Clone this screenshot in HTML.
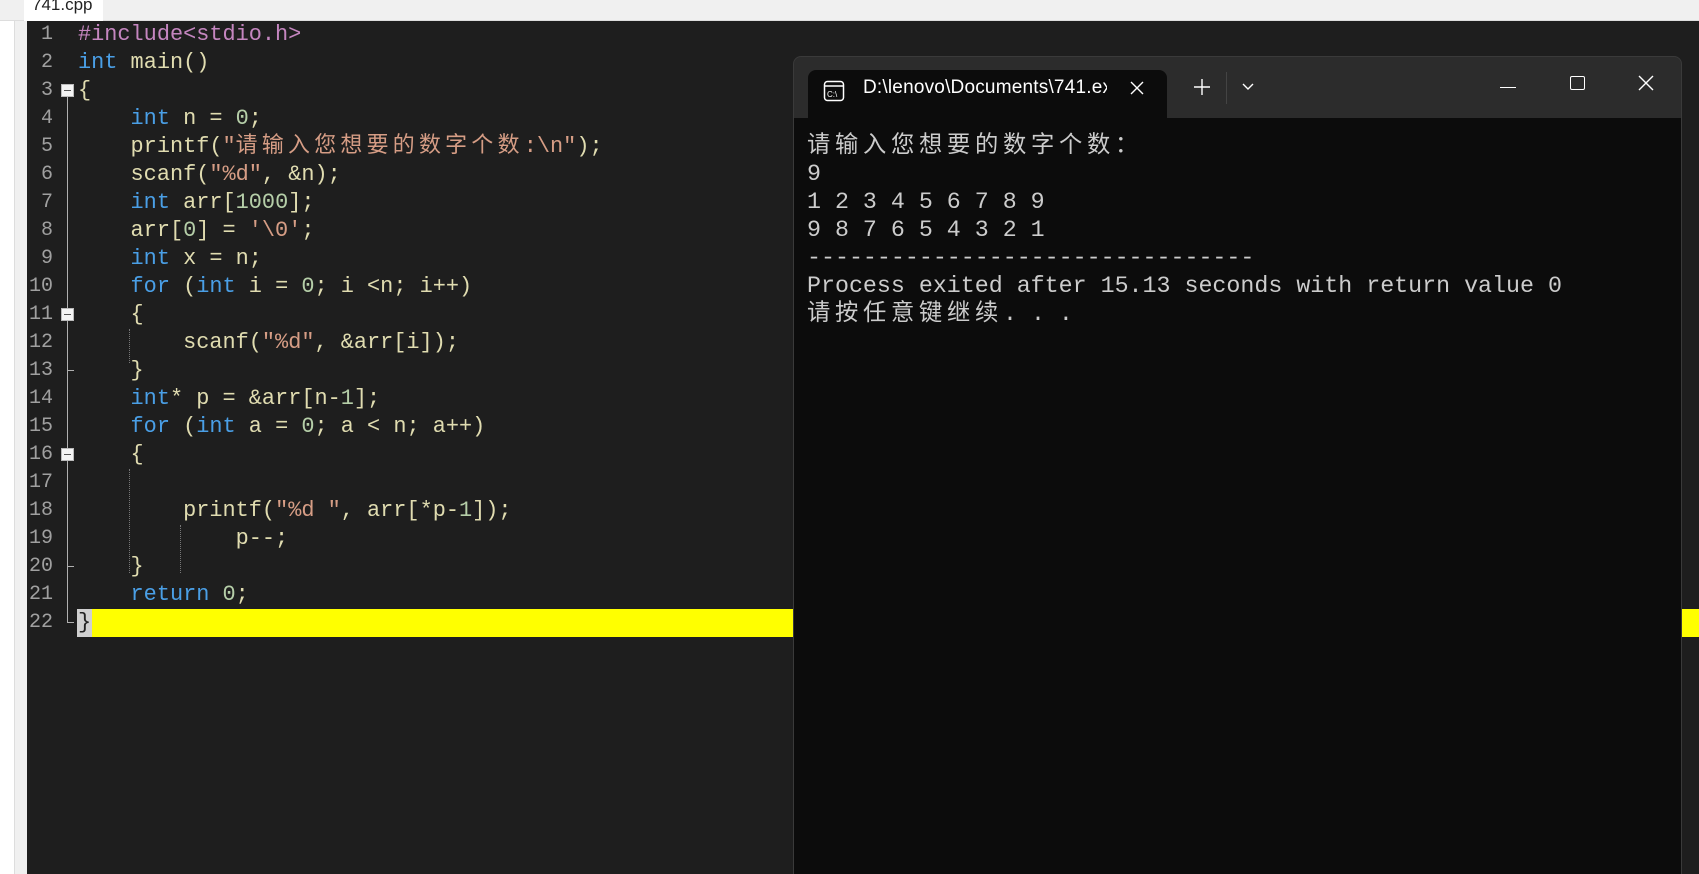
<!DOCTYPE html>
<html><head><meta charset="utf-8"><style>
*{margin:0;padding:0;box-sizing:border-box}
html,body{width:1699px;height:874px;overflow:hidden}
body{background:#fff;position:relative;font-family:"Liberation Sans","Noto Sans CJK SC",sans-serif}
.topbar{position:absolute;left:0;top:0;width:1699px;height:21px;background:#f0f0f0;border-bottom:1px solid #ddd}
.tab{position:absolute;left:24px;top:-4px;width:79px;height:25px;background:#fff;font-size:17px;color:#222;padding-left:8px;line-height:18px}
.lstrip{position:absolute;left:14px;top:21px;width:13px;height:853px;background:#f0f0f0;border-left:1px solid #ddd}
.ed{position:absolute;left:27px;top:21px;width:1672px;height:853px;background:#1e1e1e}
.ln{position:absolute;left:27px;width:26px;text-align:right;font:20px "Liberation Mono",monospace;color:#a0a0a0;line-height:28px}
.code{position:absolute;left:78px;top:21px;font:21.9px "Liberation Mono","Noto Sans CJK SC",monospace;line-height:28px;color:#e0dcb0;white-space:pre}
.code .c{letter-spacing:4.3px}
.k{color:#4a9fe6}.s{color:#d69d85}.n{color:#b5cea8}.p{color:#c586c0}
.fold{position:absolute;left:61px;width:13px;height:13px;background:#f4f4f4;border:1px solid #bbb}
.fold:after{content:"";position:absolute;left:2px;top:5px;width:7px;height:1px;background:#555}
.yl{position:absolute;left:92px;top:609px;width:1607px;height:28px;background:#ff0}
.cur{position:absolute;left:77px;top:609px;width:15px;height:28px;background:#d0d0d0}
.win{position:absolute;left:793px;top:56px;width:889px;height:818px;background:#2c2c2c;border:1px solid #3a3a3a;border-bottom:none;border-radius:8px 8px 0 0;overflow:hidden}
.cont{position:absolute;left:0;top:61px;width:889px;height:757px;background:#0c0c0c}
.ttab{position:absolute;left:14px;top:13px;width:359px;height:48px;background:#0c0c0c;border-radius:8px 8px 0 0}
.term{position:absolute;left:13px;top:75px;font:23.3px "Liberation Mono","Noto Sans CJK SC",monospace;line-height:28px;color:#cccccc;white-space:pre}
.term .c{letter-spacing:4.7px}
</style></head><body>
<div class="topbar"><div class="tab">741.cpp</div></div>
<div class="lstrip"></div>
<div class="ed"></div>
<div style="position:absolute;left:67px;top:93px;width:1px;height:530px;background:#b0b0b0"></div>
<div style="position:absolute;left:67px;top:622px;width:7px;height:1px;background:#b0b0b0"></div>
<div style="position:absolute;left:67px;top:370px;width:7px;height:1px;background:#b0b0b0"></div>
<div style="position:absolute;left:67px;top:566px;width:7px;height:1px;background:#b0b0b0"></div>
<div style="position:absolute;left:129px;top:329px;width:0;height:34px;border-left:1px dotted #777"></div>
<div style="position:absolute;left:129px;top:469px;width:0;height:104px;border-left:1px dotted #777"></div>
<div style="position:absolute;left:180px;top:525px;width:0;height:48px;border-left:1px dotted #777"></div>
<div class="ln" style="top:21px">1<br>2<br>3<br>4<br>5<br>6<br>7<br>8<br>9<br>10<br>11<br>12<br>13<br>14<br>15<br>16<br>17<br>18<br>19<br>20<br>21<br>22</div>
<div class="fold" style="top:84px"></div>
<div class="fold" style="top:308px"></div>
<div class="fold" style="top:448px"></div>
<div class="yl"></div><div class="cur"></div>
<div class="code"><span class="p">#include&lt;stdio.h&gt;</span>
<span class="k">int</span> main()
{
    <span class="k">int</span> n = <span class="n">0</span>;
    printf(<span class="s">"<span class="c">请输入您想要的数字个数</span>:\n"</span>);
    scanf(<span class="s">"%d"</span>, &amp;n);
    <span class="k">int</span> arr[<span class="n">1000</span>];
    arr[<span class="n">0</span>] = <span class="s">'\0'</span>;
    <span class="k">int</span> x = n;
    <span class="k">for</span> (<span class="k">int</span> i = <span class="n">0</span>; i &lt;n; i++)
    {
        scanf(<span class="s">"%d"</span>, &amp;arr[i]);
    }
    <span class="k">int</span>* p = &amp;arr[n-<span class="n">1</span>];
    <span class="k">for</span> (<span class="k">int</span> a = <span class="n">0</span>; a &lt; n; a++)
    {

        printf(<span class="s">"%d "</span>, arr[*p-<span class="n">1</span>]);
            p--;
    }
    <span class="k">return</span> <span class="n">0</span>;
<span style="color:#222">}</span></div>
<div class="win">
<div class="cont"></div>
<div class="ttab"></div>
<svg style="position:absolute;left:29px;top:23px" width="22" height="22" viewBox="0 0 22 22"><rect x="1.5" y="1.5" width="19" height="19" rx="3" fill="none" stroke="#fff" stroke-width="1.5"/><line x1="1.5" y1="6" x2="20.5" y2="6" stroke="#fff" stroke-width="1.5"/><text x="4" y="17" font-size="8" fill="#fff" font-family="Liberation Sans">C:\</text></svg>
<div style="position:absolute;left:69px;top:19px;width:244px;overflow:hidden;white-space:nowrap;font:19px 'Liberation Sans',sans-serif;color:#fff;line-height:24px;letter-spacing:0.2px">D:\lenovo\Documents\741.exe</div>
<svg style="position:absolute;left:336px;top:24px" width="14" height="14"><path d="M1 1L13 13M13 1L1 13" stroke="#fff" stroke-width="1.4"/></svg>
<svg style="position:absolute;left:400px;top:22px" width="16" height="16"><path d="M8 0V16M0 8H16" stroke="#fff" stroke-width="1.4"/></svg>
<div style="position:absolute;left:432px;top:15px;width:1px;height:32px;background:#444"></div>
<svg style="position:absolute;left:448px;top:26px" width="12" height="8"><path d="M1 1L6 6L11 1" stroke="#fff" stroke-width="1.4" fill="none"/></svg>
<div style="position:absolute;left:706px;top:30px;width:16px;height:1px;background:#fff"></div>
<div style="position:absolute;left:776px;top:19px;width:15px;height:14px;border:1.5px solid #fff;border-radius:2px"></div>
<svg style="position:absolute;left:844px;top:18px" width="16" height="16"><path d="M1 1L15 15M15 1L1 15" stroke="#fff" stroke-width="1.4"/></svg>
<div class="term"><span class="c">请输入您想要的数字个数：</span>
9
1 2 3 4 5 6 7 8 9
9 8 7 6 5 4 3 2 1
--------------------------------
Process exited after 15.13 seconds with return value 0
<span class="c">请按任意键继续</span>. . .</div>
</div>
</body></html>
